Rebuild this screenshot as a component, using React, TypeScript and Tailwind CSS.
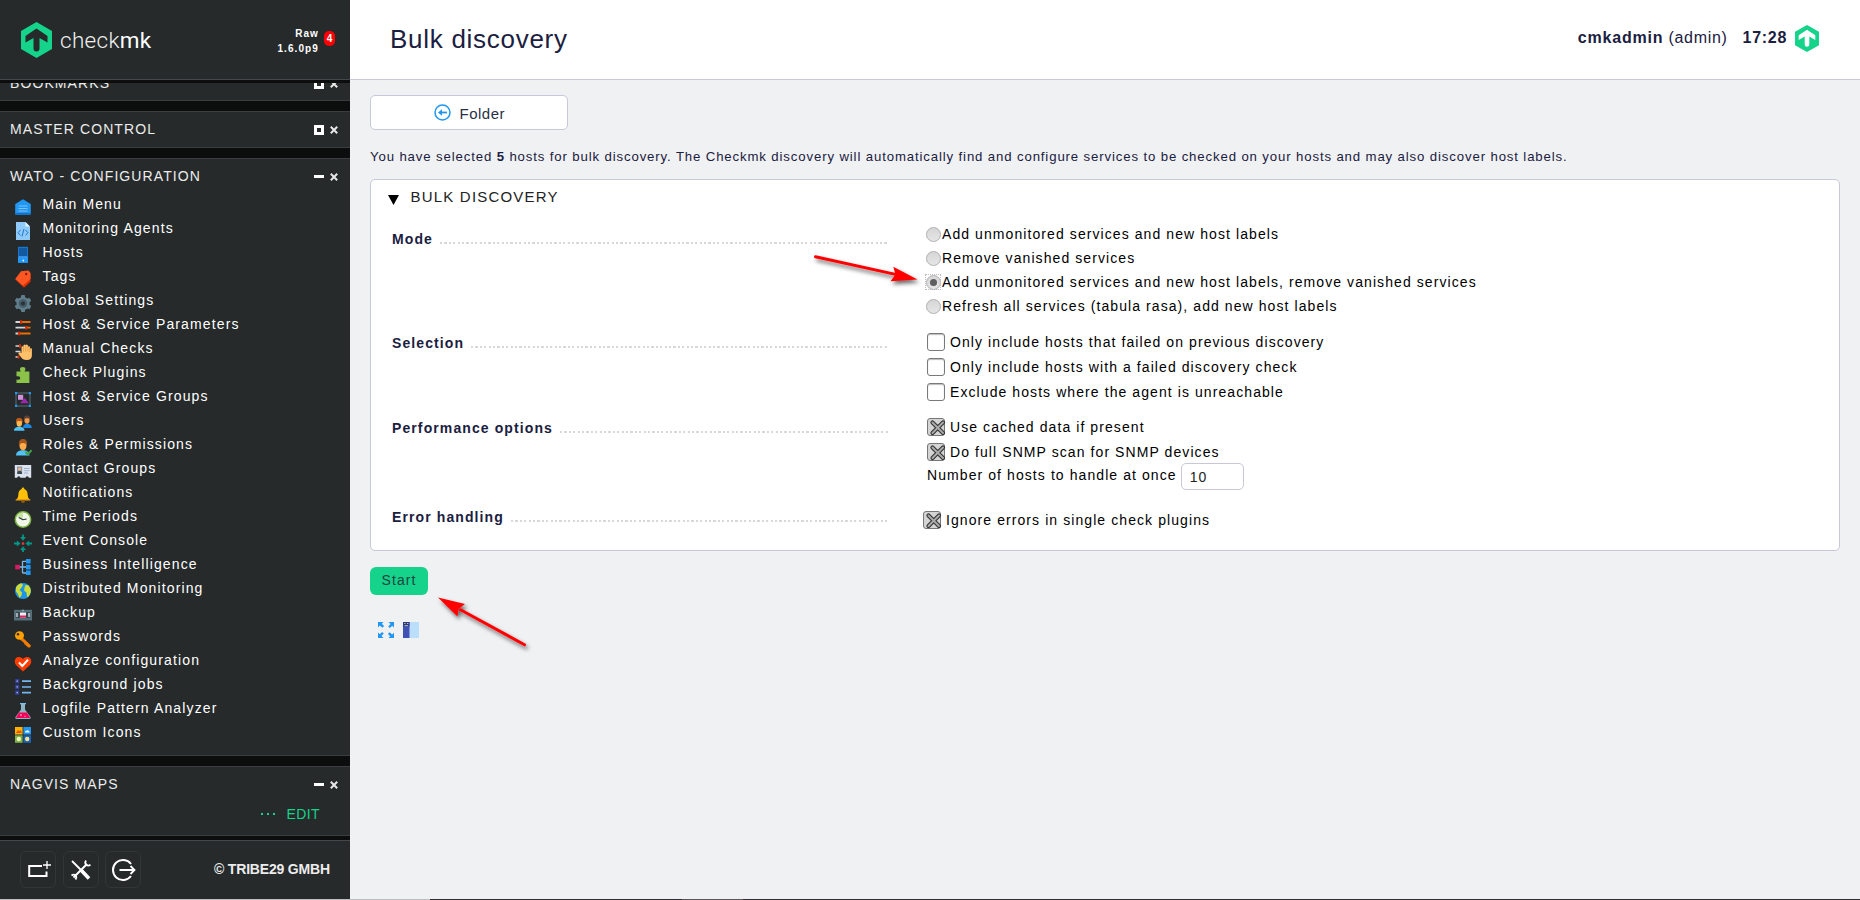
import React from "react";

type IconProps = { children: React.ReactNode };

function Icon({ children }: IconProps) {
  return (
    <svg width="18" height="18" viewBox="0 0 18 18" className="mt-1.5 shrink-0" fill="none">
      {children}
    </svg>
  );
}

const menu: { label: string; icon: React.ReactNode }[] = [
  {
    label: "Main Menu",
    icon: (
      <>
        <path d="M1.2 6 9 1.2 16.8 6v9.8a1 1 0 0 1-1 1H2.2a1 1 0 0 1-1-1z" fill="#2196f3" />
        <path d="M1.2 15h15.6v.8a1 1 0 0 1-1 1H2.2a1 1 0 0 1-1-1z" fill="#1570c4" />
        <path d="M4.500 8h9M4.500 10.500h9M4.500 13h9" stroke="#7cc0fa" strokeWidth="1.2" />
      </>
    ),
  },
  {
    label: "Monitoring Agents",
    icon: (
      <>
        <path d="M2 0h9.5L16 4.5V18H2z" fill="#90caf9" />
        <path d="M11.5 0 16 4.5h-4.5z" fill="#e1f5fe" />
        <path d="M6.5 8 4 10.7l2.5 2.7M11.5 8l2.500 2.700-2.500 2.700M10 7l-2 7.400" stroke="#1976d2" strokeWidth="1" />
      </>
    ),
  },
  {
    label: "Hosts",
    icon: (
      <>
        <path d="M4 .8h10v16H4z" fill="#1976d2" />
        <path d="M4 11.5h10v5.3H4z" fill="#2196f3" />
        <path d="M5 3h8M5 5h8M5 7h8M5 9h8" stroke="#0d3c69" strokeWidth="1" />
        <path d="M4.5 11h9" stroke="#64b5f6" strokeWidth=".8" />
        <circle cx="9.3" cy="14.5" r=".9" fill="#e3f2fd" />
      </>
    ),
  },
  {
    label: "Tags",
    icon: (
      <>
        <path d="M1.5 9.5 10 17.8l6.5-6V4L14 3z" fill="#dd2c00" />
        <path d="M7 1.2 14.5.5 16.5 3v6L9 15.7 1.2 9z" fill="#ff5722" />
        <circle cx="12.2" cy="4" r="1.2" fill="#8c1d04" />
      </>
    ),
  },
  {
    label: "Global Settings",
    icon: (
      <>
        <g fill="#607d8b">
          <circle cx="9" cy="9.5" r="6.6" />
          <rect x="7" y="1" width="4" height="17" rx=".8" />
          <rect x="7" y="1" width="4" height="17" rx=".8" transform="rotate(60 9 9.5)" />
          <rect x="7" y="1" width="4" height="17" rx=".8" transform="rotate(120 9 9.5)" />
        </g>
        <circle cx="9" cy="9.5" r="4.2" fill="#455a64" />
        <circle cx="9" cy="9.5" r="2" fill="#263238" />
      </>
    ),
  },
  {
    label: "Host & Service Parameters",
    icon: (
      <>
        <path d="M1.5 4h5M1.5 9.7h10M1.5 15.5h3.5" stroke="#cfd8dc" strokeWidth="1.8" />
        <path d="M6 4h10.5M11.5 9.7h5M5 15.5h11.5" stroke="#ef6c00" strokeWidth="1.8" />
        <path d="M7 2.300v3.400M12.2 8v3.400M5 13.800v3.400" stroke="#dd2c00" strokeWidth="2.2" />
      </>
    ),
  },
  {
    label: "Manual Checks",
    icon: (
      <>
        <path d="M1.5 4h4M1.5 9.5h5M1.5 15h3.5" stroke="#cfd8dc" strokeWidth="1.6" />
        <path d="M6 2.3v3.4M4.5 13.5v3" stroke="#dd2c00" strokeWidth="2" />
        <path
          d="M7.500 11V5.500a1 1 0 0 1 2-.5V4a1.100 1.100 0 0 1 2.200-.5 1.100 1.100 0 0 1 2.200.500V5a1 1 0 0 1 2 .500v1.500a1 1 0 0 1 2 .5v6c0 3-2 4.500-5.200 4.500-3 0-4.700-1-6.200-3.500L4.500 12c-.5-1.500 1.200-2 2-1.500z"
          fill="#ffc06a"
        />
        <path d="M9.500 5v4.500M11.700 4.500v5M13.900 5v4.500M15.800 6.500v3.500" stroke="#d98e3c" strokeWidth=".6" />
      </>
    ),
  },
  {
    label: "Check Plugins",
    icon: (
      <path
        d="M2.500 5.500H7C6.200 4.800 6 4 6 3.300a2.700 2.200 0 0 1 5.400 0c0 .8-.3 1.500-1 2.200h5V17H2.500v-3.500c2.800.8 3.700-.3 3.700-1.500s-1-2.300-3.700-1.700z"
        fill="#8bc34a"
      />
    ),
  },
  {
    label: "Host & Service Groups",
    icon: (
      <>
        <path d="M2 3h14v13H2z" stroke="#546e7a" strokeWidth="1" />
        <path d="M4 4.800h5.200v5H4z" fill="#ce93d8" />
        <path d="m10.500 8 4.500 5.200H6z" fill="#9c27b0" />
        <path d="M1 2h2.200v2.200H1zM14.800 2H17v2.200h-2.200zM1 14.800h2.200V17H1zM14.800 14.800H17V17h-2.200z" fill="#2196f3" />
      </>
    ),
  },
  {
    label: "Users",
    icon: (
      <>
        <path d="M9 14c0-3 2-4.300 4-4.300s4.800 1.300 4.800 4.300z" fill="#1e88e5" />
        <ellipse cx="13" cy="6" rx="2.600" ry="3.700" fill="#f09a4a" />
        <path d="M10 5.500C9.500 2 11.500 1.500 13 1.500s3.500.8 3 4c-1-1.500-4-2-6 0z" fill="#5d4037" />
        <path d="M0 16.700c0-3 2.500-4 5.200-4s5.300 1 5.300 4z" fill="#4fc3f7" />
        <ellipse cx="5.300" cy="8.800" rx="2.800" ry="4" fill="#ffb74d" />
        <path d="M2 8.500C1.500 4.500 3.700 4 5.300 4s3.900.8 3.200 4.500c-1-1.800-4.500-2-6.500 0z" fill="#bf5a1c" />
      </>
    ),
  },
  {
    label: "Roles & Permissions",
    icon: (
      <>
        <path d="M2 17.500c0-4 3.500-5.300 7-5.300s6.500 1.300 6.500 5.300z" fill="#4fc3f7" />
        <ellipse cx="9" cy="7.500" rx="3.500" ry="5" fill="#ffa94a" />
        <path d="M5 7C4.300 2 7 1 9 1s4.700 1 4 6c-1.500-2.500-5.500-3-8 0z" fill="#a0561c" />
        <path d="m11.500 13.800 2.200 2.400 4-4" stroke="#43a047" strokeWidth="2" />
      </>
    ),
  },
  {
    label: "Contact Groups",
    icon: (
      <>
        <path d="M.8 3h16.400v12.800h-2.400a1.600 1.600 0 0 0-3.200 0H6.400a1.600 1.600 0 0 0-3.200 0H.8z" fill="#dce3ee" />
        <path d="M3 4.500h5.200v7.500H3z" fill="#8d99a8" />
        <circle cx="5.600" cy="7" r="1.600" fill="#f3b58a" />
        <path d="M3.200 12c0-2.500 1-3 2.400-3s2.400.5 2.400 3z" fill="#37474f" />
        <path d="M10 6.500h5.500M10 8.700h5.500M10 11h4" stroke="#90a4c8" strokeWidth=".8" />
      </>
    ),
  },
  {
    label: "Notifications",
    icon: (
      <>
        <path d="M9 1.500c.9 0 1.300.6 1.300 1.400 2.700.8 3.200 3.200 3.400 6.100.1 2.200.7 3.700 2.600 4.800H1.700c1.900-1.100 2.500-2.600 2.600-4.800.2-2.900.7-5.300 3.400-6.100 0-.8.4-1.400 1.300-1.400z" fill="#ffc107" />
        <path d="M1.700 13.300h14.600v1.200H1.700z" fill="#ffa000" />
        <path d="M7 14.800h4c0 3-4 3-4 0z" fill="#8a5a10" />
      </>
    ),
  },
  {
    label: "Time Periods",
    icon: (
      <>
        <circle cx="9" cy="9.500" r="7.700" fill="#f1f8e9" stroke="#7cb342" strokeWidth="1.500" />
        <path d="M9 9.500V2.600a6.900 6.900 0 0 0-6 3.700z" fill="#c5e1a5" />
        <path d="m4.800 7.500 4 2.200 3.800-.7" stroke="#263238" strokeWidth="1.100" />
      </>
    ),
  },
  {
    label: "Event Console",
    icon: (
      <>
        <path d="M8.100.5h1.800V3h2L9 6.800 6.100 3h2zM8.100 18.500h1.800V16h2L9 12.200 6.100 16h2zM0 8.600v1.800h2.800v2L6.500 9.500 2.800 6.600v2zM18 8.600v1.800h-2.800v2L11.500 9.500l3.700-2.900v2z" fill="#009688" />
        <path d="M7.800 8.300h2.400v2.400H7.800z" fill="#e53935" />
      </>
    ),
  },
  {
    label: "Business Intelligence",
    icon: (
      <>
        <path d="M5 9h7M8.500 3v12M8.500 3.300H12M8.500 15H12" stroke="#7ab8e8" strokeWidth="1.300" />
        <path d="M1.200 6.800h4.600v4.600H1.200z" fill="#d81b60" />
        <path d="M12 1h4.600v4.600H12zM12 6.800h4.600v4.600H12zM12 12.500h4.600v4.600H12z" fill="#2196f3" />
      </>
    ),
  },
  {
    label: "Distributed Monitoring",
    icon: (
      <>
        <circle cx="9" cy="9" r="8" fill="#1e96e8" />
        <path d="M2 5.500C3 3.500 5 1.700 7.500 1.300L9 3 7.500 5.500 5.500 8l2.500 2.500-.5 3L5.500 16 4 12 2 9.500z" fill="#cddc39" />
        <path d="m11 3.500 3-.4c1.500 1.500 3 3.500 2.800 6.900L15 14l-2 1-.5-4.500-2.500-2z" fill="#cddc39" />
      </>
    ),
  },
  {
    label: "Backup",
    icon: (
      <>
        <path d="M0 3.800h18v10.700H0z" fill="#546e7a" />
        <path d="M2 6h14v6H2z" fill="#37474f" />
        <path d="M6 6.500h6v5H6z" fill="#eceff1" />
        <path d="M6 9.500h6v2H6z" fill="#e91e63" />
        <path d="M3 7v4M15 7v4" stroke="#eceff1" strokeWidth="1.200" />
        <path d="M8 3.800h2v1.400H8z" fill="#90a4ae" />
      </>
    ),
  },
  {
    label: "Passwords",
    icon: (
      <>
        <path d="m8 7 9 8.500-1 2-2 .1-1-1.300-1-.3-.3-1.300-1.300-.3-.3-1.400L6 9.500z" fill="#f57c00" />
        <ellipse cx="5.500" cy="5.500" rx="4.500" ry="4.300" fill="#ffa000" />
        <circle cx="4" cy="4.300" r="1.200" fill="#262a2b" />
      </>
    ),
  },
  {
    label: "Analyze configuration",
    icon: (
      <>
        <path d="M9 17.500 2 11C-.5 8 .8 3 5 3c2 0 3.200 1 4 2.200C9.800 4 11 3 13 3c4.200 0 5.500 5 3 8z" fill="#ff3d00" />
        <path d="m5 8.500 3.300 3.500L14 5.800" stroke="#fff" strokeWidth="2" />
      </>
    ),
  },
  {
    label: "Background jobs",
    icon: (
      <>
        <path d="M1.200 1h4v4.300h-4zM1.200 6.800h4v4.300h-4zM1.200 12.500h4v4.300h-4z" fill="#303f9f" />
        <path d="M2.600 2.600h1.200v1.200H2.600zM2.600 8.300h1.200v1.200H2.600zM2.600 14h1.200v1.200H2.600z" fill="#c5cae9" />
        <path d="M8 3.200h9M8 9h9M8 14.700h9" stroke="#72b8ee" strokeWidth="1.700" />
      </>
    ),
  },
  {
    label: "Logfile Pattern Analyzer",
    icon: (
      <>
        <path d="M7 1.500h4v6L16.500 15c.5 1-.2 2-1.200 2H2.700c-1 0-1.700-1-1.200-2L7 7.500z" fill="#90b4c4" />
        <path d="m5.200 10.500 7.600 0 3 4.700c.2.500 0 .9-.6.900H2.800c-.6 0-.8-.4-.6-.9z" fill="#f50057" />
        <path d="M6 1h6v1.300H6z" fill="#78c0e8" />
        <circle cx="7" cy="13" r="1" fill="#ff80ab" />
        <circle cx="11" cy="14.200" r=".8" fill="#ff80ab" />
      </>
    ),
  },
  {
    label: "Custom Icons",
    icon: (
      <>
        <path d="M1 1h7.600v7.500H1z" fill="#ffb300" />
        <path d="M9.400 1H17v7.500H9.400z" fill="#2196f3" />
        <path d="M1 9.300h7.600v7.500H1z" fill="#7cb342" />
        <path d="M9.400 9.300H17v7.500H9.400z" fill="#1565c0" />
        <path d="m2 7 2-3 1.300 1.500L6.500 4 8 7z" fill="#e65100" />
        <path d="M11 6.500c0-2 1.500-2 2-2 1-.8 2.500.3 2.700 2z" fill="#e3f2fd" />
        <circle cx="4.800" cy="13" r="2.200" fill="#f0f4c3" />
        <circle cx="13.200" cy="13" r="2.200" fill="#ffe082" />
      </>
    ),
  },
];

function Controls({ open }: { open?: boolean }) {
  return (
    <div className={"flex items-center gap-[6px] " + (open ? "h-[23px]" : "h-6")}>
      {open ? <div className="mt-px h-[3px] w-[10px] bg-white" /> : <div className="mt-[2px] size-[10px] border-[3px] border-white" />}
      <svg width="8" height="8" viewBox="0 0 8 8" className="mt-[2px]">
        <path d="m.8.8 6.400 6.400M7.200.8.8 7.200" stroke="#e8e8e8" strokeWidth="2" />
      </svg>
    </div>
  );
}

function Snapin({ title, open, className, children }: { title: string; open?: boolean; className: string; children?: React.ReactNode }) {
  return (
    <section className={"mb-[10px] shrink-0 border-y border-[#3a3e40] bg-[#262a2b] pt-[5px] " + className}>
      <div className="flex justify-between pr-[12px] pl-[10px]">
        <h2 className="text-[14px] leading-6 tracking-[1.1px] text-[#ececec]">{title}</h2>
        <Controls open={open} />
      </div>
      {children}
    </section>
  );
}

function FooterButton({ children }: { children: React.ReactNode }) {
  return <div className="flex h-[37px] w-[36px] items-center justify-center rounded-[6px] border border-[#323637] pl-px">{children}</div>;
}

function Sidebar() {
  return (
    <aside className="flex w-[350px] shrink-0 flex-col bg-[#0c0e0e] text-white">
      <header className="flex h-[80px] shrink-0 border-b border-[#45484a] bg-[#262a2b] pl-[21px]">
        <svg width="31" height="36" viewBox="0 0 31 36" className="mt-[22px]">
          <path d="M15.500 0 31 9v18l-15.500 9L0 27V9z" fill="#15d38a" />
          <path d="m15.500 6.500 11 7.500v6.500l-8-4.500v10.500a3 3 0 0 1-6 0V16l-8 4.500V14z" fill="#262a2b" />
        </svg>
        <div className="mt-[22px] ml-[8px] w-[170px] font-['Roboto'] text-[22.500px] leading-[36px] font-light tracking-[0.300px] text-[#f0f0f0]">
          check<span className="font-normal text-white">mk</span>
        </div>
        <div className="mt-[26px] w-[89px] text-right text-[10px] leading-[15px] font-bold tracking-[1.100px]">
          <div>Raw</div>
          <div>1.6.0p9</div>
        </div>
        <div className="mt-[31px] ml-[5px] h-[15px] w-[11px] rounded-[5px] bg-[#ff0000] text-center text-[10px] leading-[15px] font-bold">4</div>
      </header>

      <div className="mt-[3px] flex min-h-0 flex-1 flex-col overflow-hidden">
        <Snapin title="BOOKMARKS" className="-mt-[18px] h-[36px]" />
        <Snapin title="MASTER CONTROL" className="h-[37px]" />
        <Snapin title="WATO - CONFIGURATION" open className="h-[598px]">
          <ul className="mt-1 pl-[14px]">
            {menu.map((m) => (
              <li key={m.label} className="flex h-6 gap-[10.500px] text-[14px] leading-6 tracking-[1.130px] text-white">
                <Icon>{m.icon}</Icon>
                {m.label}
              </li>
            ))}
          </ul>
        </Snapin>
        <Snapin title="NAGVIS MAPS" open className="h-[70px]">
          <div className="mt-[6px] flex items-center justify-end pr-[30px] text-[14px] leading-6 tracking-[0.400px] text-[#15d38a]">
            <div className="mr-[12px] flex gap-[4px]">
              <i className="size-[2px] bg-[#15d38a]" />
              <i className="size-[2px] bg-[#15d38a]" />
              <i className="size-[2px] bg-[#15d38a]" />
            </div>
            EDIT
          </div>
        </Snapin>
      </div>

      <footer className="flex h-[59px] shrink-0 items-start border-t border-[#45484a] bg-[#262a2b] pt-[10px] pl-[20px]">
        <div className="flex gap-[6.500px]">
          <FooterButton>
            <svg width="25" height="18" viewBox="0 0 25 18" fill="none" stroke="#fff">
              <path d="M16 5H3.200v10h17.300v-4.500" strokeWidth="2" />
              <path d="M21 0v8M17 4h8" strokeWidth="1.300" />
            </svg>
          </FooterButton>
          <FooterButton>
            <svg width="22" height="22" viewBox="0 0 22 22" fill="none" stroke="#fff">
              <path d="m2 2 9 9" strokeWidth="1.800" />
              <path d="m11 11 8 8.500" strokeWidth="3.600" />
              <path d="M3.500 18.500 17 5" strokeWidth="2" />
              <path d="M16 1.500c-1 1.500-1 3 .2 4.300 1.200 1 2.800 1 4.300 0M1.500 16.500c1.500-1 3-1 4 0s1 2.500 0 4" strokeWidth="1.800" />
            </svg>
          </FooterButton>
          <FooterButton>
            <svg width="25" height="24" viewBox="0 0 25 24" fill="none" stroke="#fff">
              <path d="M20 6a10 10 0 1 0 0 12" strokeWidth="2" />
              <path d="M8.500 12h15M19.500 8l4 4-4 4" strokeWidth="1.800" />
            </svg>
          </FooterButton>
        </div>
        <div className="mt-[6px] ml-[73px] text-[14px] leading-6 font-bold tracking-[-0.180px] whitespace-nowrap text-[#ececec]">© TRIBE29 GMBH</div>
      </footer>
    </aside>
  );
}

function Field({ label, top, labelClass, children }: { label: string; top: string; labelClass: string; children: React.ReactNode }) {
  return (
    <div className={"flex " + top}>
      <div className={"flex h-6 w-[496px] gap-[7px] text-[14px] leading-6 font-bold tracking-[1.100px] text-[#1a2040] " + labelClass}>
        {label}
        <div className="mt-[15px] h-[2px] flex-1 bg-[repeating-linear-gradient(90deg,#d8d8d8_0_2.2px,transparent_2.2px_4.4px)]" />
      </div>
      {children}
    </div>
  );
}

function Radio({ label, checked }: { label: string; checked?: boolean }) {
  return (
    <div className="flex h-6 leading-6">
      <div className={"mt-[4px] mr-px flex size-[16px] items-center justify-center " + (checked ? "outline outline-1 -outline-offset-1 outline-dotted outline-[#bbb]" : "")}>
        <div className="flex size-[15px] items-center justify-center rounded-full border border-[#b0b0b0] bg-linear-to-b from-[#d6d6d6] to-[#e6e6e6]">
          {checked && <div className="size-[7px] rounded-full bg-[#5f5f5f]" />}
        </div>
      </div>
      {label}
    </div>
  );
}

function Check({ label, checked }: { label: string; checked?: boolean }) {
  return (
    <div className="flex h-[25px] leading-6">
      <div className={"mt-[3px] mr-[5px] size-[18px] rounded-[3px] border " + (checked ? "border-[#777] bg-[#d4d4d4]" : "border-[#777a7a] bg-white shadow-[inset_0_1px_1px_#bbb]")}>
        {checked && (
          <svg width="18" height="18" viewBox="0 0 18 18" className="overflow-visible">
            <path d="m4.500 3.500 10.500 10.500M15 3.500l-10.500 10.500" stroke="#333" strokeWidth="4.200" strokeLinecap="round" />
            <path d="m4.500 3.500 10.500 10.500M15 3.500l-10.500 10.500" stroke="#aaa" strokeWidth="2" strokeLinecap="round" />
          </svg>
        )}
      </div>
      {label}
    </div>
  );
}

export default function App() {
  return (
    <div className="relative flex h-[900px] w-[1860px] flex-col overflow-hidden bg-[#f0f1f3] font-['Liberation_Sans',Arial,sans-serif]">
      <div className="flex h-[899px]">
        <Sidebar />
        <main className="flex flex-1 flex-col">
          <header className="flex h-[80px] shrink-0 items-start justify-between border-b border-[#c8c8da] bg-white pr-[41px] pl-[40px] text-[#1a2040]">
            <h1 className="mt-[19px] text-[26px] leading-10 tracking-[0.720px]">Bulk discovery</h1>
            <div className="mt-[25px] flex text-[16px] leading-6 tracking-[0.700px]">
              <b className="mt-px tracking-[0.820px]">cmkadmin</b>
              <span className="mt-px ml-[5px]">(admin)</span>
              <b className="mt-px mr-[8px] ml-[15px]">17:28</b>
              <svg width="24" height="27" viewBox="0 0 24 28" preserveAspectRatio="none">
                <path d="m12 0 12 7v14l-12 7-12-7V7z" fill="#15d38a" />
                <path d="m12 5 8.300 5.700v4.800L14.300 12v8.300a2.300 2.300 0 0 1-4.600 0V12l-6 3.500v-4.800z" fill="#fff" />
              </svg>
            </div>
          </header>

          <div className="flex flex-1 flex-col pt-[15px] pr-[20px] pl-[20px]">
            <button className="flex h-[35px] w-[198px] shrink-0 rounded-[5px] border border-[#c8c8da] bg-white pl-[62.500px] text-[15px] leading-6 tracking-[0.500px] text-[#2a2f45]">
              <svg width="17" height="17" viewBox="0 0 17 17" fill="none" className="mt-[8px] mr-[9px]">
                <circle cx="8.500" cy="8.500" r="7.500" stroke="#2196f3" strokeWidth="1.500" />
                <path d="M6 8.500h7" stroke="#2196f3" strokeWidth="1.800" />
                <path d="M8 5.200v6.600L4 8.500z" fill="#2196f3" />
              </svg>
              <span className="mt-[6px]">Folder</span>
            </button>
            <p className="mt-[15px] h-6 text-[13.200px] leading-6 tracking-[0.870px] whitespace-nowrap text-[#1a2040]">
              You have selected <b>5</b> hosts for bulk discovery. The Checkmk discovery will automatically find and configure services to be checked on your hosts and may also
              discover host labels.
            </p>

            <section className="mt-[10px] h-[372px] shrink-0 rounded-[5px] border border-[#c8c8da] bg-white pt-[5px] text-[14px] tracking-[1.080px] text-black">
              <div className="flex h-6 pl-[17px] text-[15px] leading-6 tracking-[1.200px] text-[#222]">
                <svg width="11" height="10" viewBox="0 0 11 10" className="mt-[10px] mr-[11.500px]">
                  <path d="M0 0h11L5.500 10z" fill="#000" />
                </svg>
                BULK DISCOVERY
              </div>
              <div className="pl-[21px]">
                <Field label="Mode" top="mt-[13px]" labelClass="mt-[5px] mr-[37px]">
                  <div>
                    <Radio label="Add unmonitored services and new host labels" />
                    <Radio label="Remove vanished services" />
                    <Radio label="Add unmonitored services and new host labels, remove vanished services" checked />
                    <Radio label="Refresh all services (tabula rasa), add new host labels" />
                  </div>
                </Field>
                <Field label="Selection" top="mt-[12px]" labelClass="mt-px mr-[39px]">
                  <div>
                    <Check label="Only include hosts that failed on previous discovery" />
                    <Check label="Only include hosts with a failed discovery check" />
                    <Check label="Exclude hosts where the agent is unreachable" />
                  </div>
                </Field>
                <Field label="Performance options" top="mt-[10px]" labelClass="mt-px mr-[39px]">
                  <div>
                    <Check label="Use cached data if present" checked />
                    <Check label="Do full SNMP scan for SNMP devices" checked />
                    <div className="-mt-[2px] flex h-[27px] leading-6">
                      Number of hosts to handle at once
                      <input
                        defaultValue="10"
                        className="ml-[4px] h-[27px] w-[63px] rounded-[5px] border border-[#c8c8da] bg-white pl-[8px] text-[14px] tracking-[1.100px] text-[#222]"
                      />
                    </div>
                  </div>
                </Field>
                <Field label="Error handling" top="mt-[16px]" labelClass="-mt-px mr-[35px]">
                  <div className="mt-[2px]">
                    <Check label="Ignore errors in single check plugins" checked />
                  </div>
                </Field>
              </div>
            </section>

            <button className="mt-[16px] h-[28px] w-[58px] shrink-0 rounded-[6px] bg-[#15d38a] pb-px text-[14px] tracking-[1.100px] text-[#1d4540]">Start</button>

            <div className="mt-[27px] ml-[8px] flex gap-[9px]">
              <svg width="16" height="16" viewBox="0 0 16 16">
                <path d="M0 0h5.500L3.800 1.800l2.300 2.300-1.700 1.700-2.500-2.300L0 5.500zM16 0v5.500l-1.800-1.700-2.300 2.300-1.700-1.700 2.300-2.500L10.500 0zM0 16v-5.500l1.800 1.700 2.300-2.300 1.700 1.700-2.300 2.500L5.500 16zM16 16h-5.500l1.700-1.800-2.300-2.300 1.700-1.700 2.500 2.300 1.900-1.700z" fill="#2196f3" />
              </svg>
              <svg width="16" height="16" viewBox="0 0 16 16">
                <path d="M0 0h16v16H0z" fill="#bbdefb" />
                <path d="M0 0h6.500v16H0z" fill="#3f51b5" />
                <path d="M0 0h6.500v4.500H0z" fill="#283593" />
                <path d="M1.200 1.500h1.400M4 1.500h1.400M1.500 3.700h3.700" stroke="#c5c87a" />
              </svg>
            </div>
          </div>
        </main>
      </div>
      <div className="flex h-px shrink-0">
        <div className="w-[430px] bg-[#bdbdbf]" />
        <div className="w-[252px] bg-[#322d2f]" />
        <div className="w-[61px] bg-[#5c555a]" />
        <div className="flex-1 bg-[#322d2f]" />
      </div>

      <svg width="1860" height="900" viewBox="0 0 1860 900" className="pointer-events-none absolute inset-0">
        <defs>
          <filter id="shadow" x="-20%" y="-50%" width="150%" height="220%">
            <feDropShadow dx="2" dy="3" stdDeviation="2" floodColor="#000" floodOpacity="0.6" />
          </filter>
        </defs>
        <g filter="url(#shadow)" fill="#ff0000" stroke="#ff0000" strokeLinecap="round">
          <path d="m815.500 256.700 80 17.700" strokeWidth="3" />
          <path d="m917.500 279.500-24.200-12.800 2.200 7.700-5 6.900z" strokeWidth="0" />
        </g>
        <g filter="url(#shadow)" fill="#ff0000" stroke="#ff0000" strokeLinecap="round">
          <path d="m524.500 644.700-64-35" strokeWidth="3" />
          <path d="m438 597.500 27 6.500-6.500 5-1 7.500z" strokeWidth="0" />
        </g>
      </svg>
    </div>
  );
}
